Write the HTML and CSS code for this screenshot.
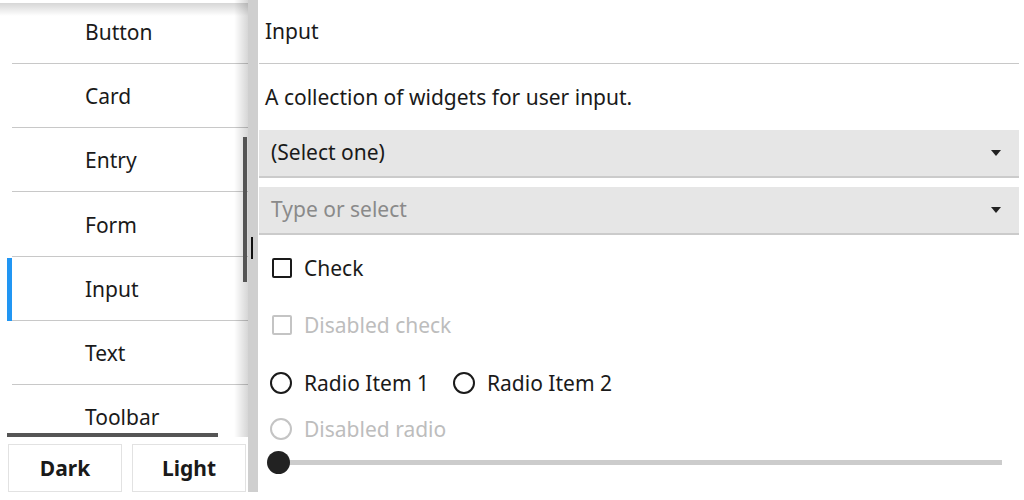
FILE: index.html
```html
<!DOCTYPE html>
<html>
<head>
<meta charset="utf-8">
<link rel="stylesheet" href="styles.css">
</head>
<body>
<div class="app">
  <aside class="nav">
    <div class="list">
      <div class="item"><span>Button</span></div>
      <div class="item"><span>Card</span></div>
      <div class="item"><span>Entry</span></div>
      <div class="item"><span>Form</span></div>
      <div class="item selected"><span>Input</span></div>
      <div class="item"><span>Text</span></div>
      <div class="item last"><span>Toolbar</span></div>
      <div class="shadow-top"></div>
      <div class="shadow-right"></div>
      <div class="vscroll"></div>
      <div class="hscroll"></div>
    </div>
    <div class="theme-buttons">
      <button class="btn">Dark</button>
      <button class="btn">Light</button>
    </div>
  </aside>
  <div class="split"><div class="handle"></div></div>
  <main class="content">
    <div class="title">Input</div>
    <div class="desc">A collection of widgets for user input.</div>
    <div class="select">
      <span>(Select one)</span>
      <svg class="arrow" width="10" height="6" viewBox="0 0 10 6"><path d="M0 0 L10 0 L5 6 Z" fill="#222"/></svg>
    </div>
    <div class="select entry">
      <span class="placeholder">Type or select</span>
      <svg class="arrow" width="10" height="6" viewBox="0 0 10 6"><path d="M0 0 L10 0 L5 6 Z" fill="#222"/></svg>
    </div>
    <div class="row r-check">
      <span class="box"></span><span>Check</span>
    </div>
    <div class="row r-dcheck disabled">
      <span class="box"></span><span>Disabled check</span>
    </div>
    <div class="row r-radio">
      <span class="radio-opt"><span class="circle"></span><span>Radio Item 1</span></span>
      <span class="radio-opt"><span class="circle"></span><span>Radio Item 2</span></span>
    </div>
    <div class="row r-dradio disabled">
      <span class="circle"></span><span>Disabled radio</span>
    </div>
    <div class="row r-slider">
      <div class="track"><div class="thumb"></div></div>
    </div>
  </main>
</div>
</body>
</html>
```
FILE: styles.css
```css
* { box-sizing: border-box; }
html, body { margin: 0; padding: 0; background: #fff; }
body {
  width: 1024px;
  height: 500px;
  overflow: hidden;
  font-family: "Noto Sans", "Open Sans", sans-serif;
  font-size: 21px;
  color: #1a1a1a;
}
.app {
  display: flex;
  height: 492px;
}
.nav {
  width: 248px;
  display: flex;
  flex-direction: column;
}
.list {
  position: relative;
  height: 437px;
  overflow: hidden;
  padding-left: 7px;
}
.item {
  height: 64.17px;
  display: flex;
  align-items: center;
  padding-left: 78px;
  position: relative;
}
.item::after {
  content: "";
  position: absolute;
  left: 5px;
  right: 0;
  bottom: 0;
  height: 1px;
  background: #c8c8c8;
}
.item.last::after { display: none; }
.item.selected::before {
  content: "";
  position: absolute;
  left: 0;
  top: 1px;
  bottom: 0;
  width: 5px;
  background: #2196f3;
}
.shadow-top {
  position: absolute;
  left: 0; right: 0; top: 3px;
  height: 13px;
  background: linear-gradient(to bottom, rgba(0,0,0,0.16), rgba(0,0,0,0));
}
.shadow-right {
  position: absolute;
  top: 0; bottom: 0; right: 0;
  width: 14px;
  background: linear-gradient(to right, rgba(0,0,0,0), rgba(0,0,0,0.16));
}
.vscroll {
  position: absolute;
  right: 1px;
  top: 137px;
  width: 4px;
  height: 145px;
  background: #555;
}
.hscroll {
  position: absolute;
  left: 7px;
  top: 433px;
  width: 211px;
  height: 4px;
  background: #555;
}
.theme-buttons {
  display: flex;
  gap: 10px;
  padding: 7px 2px 0 8px;
}
.btn {
  flex: 1;
  height: 48px;
  background: #fff;
  border: 1px solid #e2e2e2;
  font-family: "Noto Sans", sans-serif;
  font-weight: bold;
  font-size: 21px;
  color: #1a1a1a;
  padding: 0;
}
.split {
  width: 10px;
  background: #cfcfcf;
  display: flex;
  align-items: center;
  justify-content: center;
}
.handle {
  width: 2px;
  height: 22px;
  background: #111;
  margin-left: -2px;
  margin-top: 3px;
}
.content {
  flex: 1;
  padding: 0 5px 0 1px;
  display: flex;
  flex-direction: column;
}
.title {
  height: 64px;
  border-bottom: 1px solid #c8c8c8;
  display: flex;
  align-items: center;
  padding-left: 6px;
  padding-bottom: 1px;
}
.desc {
  height: 66px;
  display: flex;
  align-items: center;
  padding-left: 6px;
}
.select {
  height: 48px;
  background: #e6e6e6;
  border-bottom: 2px solid #cbcbcb;
  display: flex;
  align-items: center;
  justify-content: space-between;
  padding: 0 18px 2px 12px;
}
.select.entry { margin-top: 9px; }
.placeholder { color: #8a8a8a; }
.arrow { display: block; margin-top: 1px; }
.row {
  display: flex;
  align-items: center;
  padding-left: 13px;
}
.r-check { height: 66px; }
.r-dcheck { height: 48px; }
.r-radio { height: 68px; padding-left: 11px; gap: 24px; }
.r-dradio { height: 24px; padding-left: 11px; }
.r-slider { height: 42px; padding-left: 9px; padding-right: 17px; }
.box {
  width: 20px;
  height: 20px;
  border: 2px solid #1a1a1a;
  border-radius: 2px;
  margin-right: 12px;
}
.disabled { color: #bdbdbd; }
.disabled .box, .disabled .circle { border-color: #c4c4c4; }
.radio-opt { display: flex; align-items: center; }
.circle {
  width: 22px;
  height: 22px;
  border: 2px solid #1a1a1a;
  border-radius: 50%;
  margin-right: 12px;
}
.track {
  position: relative;
  flex: 1;
  height: 5px;
  background: #cccccc;
}
.thumb {
  position: absolute;
  left: -1px;
  top: -9px;
  width: 23px;
  height: 23px;
  border-radius: 50%;
  background: #222;
}
```
